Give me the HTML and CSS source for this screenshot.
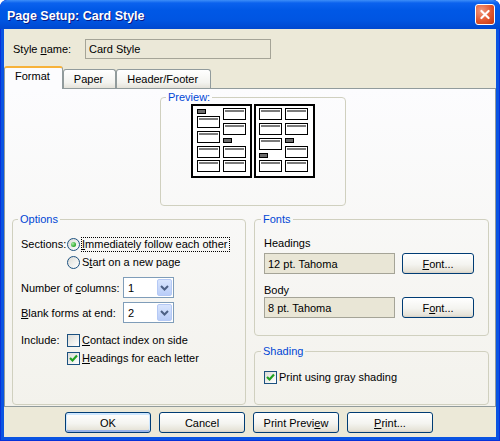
FILE: index.html
```html
<!DOCTYPE html>
<html lang="en">
<head>
    <meta charset="UTF-8">
    <title>Page Setup: Card Style</title>
    <link rel="stylesheet" href="styles.css">
</head>
<body>
    <div class="window">
        <div class="titlebar">
            <span class="title">Page Setup: Card Style</span>
            <div class="close-btn">
                <svg width="20" height="21" viewBox="0 0 20 21">
                    <path d="M6 6.5 L14 14.5 M14 6.5 L6 14.5" stroke="#fff" stroke-width="2.4" stroke-linecap="round"/>
                </svg>
            </div>
        </div>

        <div class="client">
            <div class="style-row">
                <span class="style-label">Style <u>n</u>ame:</span>
                <div class="textbox style-name">Card Style</div>
            </div>

            <div class="tabs">
                <div class="tab active">Format</div>
                <div class="tab">Paper</div>
                <div class="tab">Header/Footer</div>
            </div>

            <div class="tab-panel">
                <fieldset class="group preview-group">
                    <legend>Preview:</legend>
                    <svg class="preview-pages" width="125" height="74" viewBox="0 0 125 74">
                        <defs>
                            <g id="card">
                                <rect x="0.5" y="0.5" width="22" height="11" fill="#fff" stroke="#000"/>
                                <rect x="2" y="2" width="19" height="2" fill="#7b7b7b"/>
                            </g>
                            <rect id="tag" x="0.5" y="0.5" width="8" height="4" fill="#6a6a6a" stroke="#000"/>
                        </defs>
                        <!-- left page -->
                        <rect x="1" y="1" width="59" height="72" fill="#fff" stroke="#000" stroke-width="2"/>
                        <use href="#tag" x="6" y="5"/>
                        <use href="#card" x="6" y="12"/>
                        <use href="#card" x="6" y="27"/>
                        <use href="#card" x="6" y="42"/>
                        <use href="#card" x="6" y="56"/>
                        <use href="#card" x="32" y="4"/>
                        <use href="#card" x="32" y="19"/>
                        <use href="#tag" x="32" y="34"/>
                        <use href="#card" x="32" y="42"/>
                        <use href="#card" x="32" y="56"/>
                        <!-- right page -->
                        <rect x="64" y="1" width="59" height="72" fill="#fff" stroke="#000" stroke-width="2"/>
                        <use href="#card" x="68" y="4"/>
                        <use href="#card" x="68" y="19"/>
                        <use href="#card" x="68" y="34"/>
                        <use href="#tag" x="68" y="49"/>
                        <use href="#card" x="68" y="56"/>
                        <use href="#card" x="94" y="4"/>
                        <use href="#card" x="94" y="19"/>
                        <use href="#tag" x="94" y="34"/>
                        <use href="#card" x="94" y="42"/>
                        <use href="#card" x="94" y="56"/>
                    </svg>
                </fieldset>

                <div class="columns">
                    <fieldset class="group options-group">
                        <legend>Options</legend>
                        <div class="opt-row">
                            <span class="opt-label">Sections:</span>
                            <span class="radio checked"></span>
                            <span class="choice focused"><u>I</u>mmediately follow each other</span>
                        </div>
                        <div class="opt-row">
                            <span class="opt-label"></span>
                            <span class="radio"></span>
                            <span class="choice">S<u>t</u>art on a new page</span>
                        </div>
                        <div class="opt-row select-row">
                            <span class="opt-label wide">Number of <u>c</u>olumns:</span>
                            <div class="select">
                                <span class="select-value">1</span>
                                <span class="select-arrow">
                                    <svg width="9" height="6" viewBox="0 0 9 6"><path d="M1 1 L4.5 4.5 L8 1" fill="none" stroke="#4d6185" stroke-width="2"/></svg>
                                </span>
                            </div>
                        </div>
                        <div class="opt-row select-row">
                            <span class="opt-label wide"><u>B</u>lank forms at end:</span>
                            <div class="select">
                                <span class="select-value">2</span>
                                <span class="select-arrow">
                                    <svg width="9" height="6" viewBox="0 0 9 6"><path d="M1 1 L4.5 4.5 L8 1" fill="none" stroke="#4d6185" stroke-width="2"/></svg>
                                </span>
                            </div>
                        </div>
                        <div class="opt-row include-row">
                            <span class="opt-label">Include:</span>
                            <span class="checkbox"></span>
                            <span><u>C</u>ontact index on side</span>
                        </div>
                        <div class="opt-row">
                            <span class="opt-label"></span>
                            <span class="checkbox checked">
                                <svg width="11" height="11" viewBox="0 0 11 11"><path d="M2 5 L4.5 7.5 L9 2.5" fill="none" stroke="#21a121" stroke-width="2.2"/></svg>
                            </span>
                            <span><u>H</u>eadings for each letter</span>
                        </div>
                    </fieldset>

                    <div class="right-col">
                        <fieldset class="group fonts-group">
                            <legend>Fonts</legend>
                            <div class="fonts-label">Headings</div>
                            <div class="font-row">
                                <div class="textbox font-field">12 pt. Tahoma</div>
                                <div class="btn font-btn"><span><u>F</u>ont...</span></div>
                            </div>
                            <div class="fonts-label body-label">Body</div>
                            <div class="font-row">
                                <div class="textbox font-field">8 pt. Tahoma</div>
                                <div class="btn font-btn"><span>F<u>o</u>nt...</span></div>
                            </div>
                        </fieldset>

                        <fieldset class="group shading-group">
                            <legend>Shading</legend>
                            <div class="opt-row shading-row">
                                <span class="checkbox checked">
                                    <svg width="11" height="11" viewBox="0 0 11 11"><path d="M2 5 L4.5 7.5 L9 2.5" fill="none" stroke="#21a121" stroke-width="2.2"/></svg>
                                </span>
                                <span>Print using <u>g</u>ray shading</span>
                            </div>
                        </fieldset>
                    </div>
                </div>
            </div>

            <div class="buttons">
                <div class="btn default">OK</div>
                <div class="btn">Cancel</div>
                <div class="btn">Print Previ<u>e</u>w</div>
                <div class="btn"><u>P</u>rint...</div>
            </div>
        </div>
    </div>
</body>
</html>
```

FILE: styles.css
```css
* {
    box-sizing: border-box;
}

body {
    margin: 0;
    font-family: "Liberation Sans", Arial, sans-serif;
    font-size: 11px;
    color: #000;
}

/* window frame */
.window {
    width: 500px;
    height: 441px;
    display: flex;
    flex-direction: column;
    background: #0a54e2;
    border-radius: 7px 7px 0 0;
    box-shadow: inset 0 0 0 1px #0831d9;
    overflow: hidden;
}

.titlebar {
    height: 29px;
    display: flex;
    align-items: center;
    justify-content: space-between;
    padding: 0 5px 0 7px;
    background: linear-gradient(#3d8ef8 0, #0b62ee 3px, #0058e6 10px, #0055e2 20px, #0048cf 29px);
    border-radius: 7px 7px 0 0;
}

.title {
    margin-top: 3px;
    color: #fff;
    font-weight: bold;
    font-size: 12.5px;
    text-shadow: 1px 1px #0a1883;
}

.close-btn {
    width: 20px;
    height: 21px;
    border: 1px solid #fff;
    border-radius: 3px;
    background: radial-gradient(circle at 30% 30%, #f09a80, #e2572f 55%, #c3360f);
    display: flex;
    align-items: center;
    justify-content: center;
}

.client {
    flex: 1;
    margin: 0 4px 4px;
    background: #ece9d8;
    display: flex;
    flex-direction: column;
}

/* push buttons */
.btn {
    width: 86px;
    height: 21px;
    border: 1px solid #003c74;
    border-radius: 3px;
    background: linear-gradient(#fff, #f4f4f0 55%, #e6e3d8 90%, #d6d0c5);
    display: flex;
    align-items: center;
    justify-content: center;
    white-space: nowrap;
}

.btn.default {
    box-shadow: inset 0 1px 0 1px #cee7ff, inset 0 -1px 0 1px #98b4e8;
}

/* style name */
.style-row {
    display: flex;
    align-items: center;
    padding: 10px 0 0 9px;
}

.style-label {
    width: 72px;
}

.textbox {
    height: 20px;
    border: 1px solid #a5a497;
    background: #ebe8d8;
    padding-left: 3px;
    display: flex;
    align-items: center;
    white-space: nowrap;
}

.style-name {
    width: 186px;
}

/* tabs */
.tabs {
    display: flex;
    align-items: flex-end;
    margin-top: 7px;
}

.tab {
    height: 19px;
    padding: 0 12px 0 10px;
    border: 1px solid #919b9c;
    border-bottom: none;
    border-radius: 3px 3px 0 0;
    background: linear-gradient(#fff, #f3f3ef 70%, #e4e2d9);
    display: flex;
    align-items: center;
}

.tab.active {
    height: 23px;
    margin-bottom: -1px;
    padding-bottom: 6px;
    border-top: 2px solid #f7b23a;
    background: #fcfcfe;
    position: relative;
    z-index: 1;
}

.tab-panel {
    flex: 1;
    border: 1px solid #919b9c;
    background: linear-gradient(#fcfcfe, #f3f2ec);
    display: flex;
    flex-direction: column;
    padding: 2px 6px 1px 7px;
}

/* group boxes */
.group {
    margin: 0;
    padding: 0;
    min-width: 0;
    border: 1px solid #d0d0bf;
    border-radius: 4px;
}

.group legend {
    color: #0046d5;
    padding: 0 2px;
    line-height: 13px;
    margin-left: -3px;
}

.preview-group {
    width: 186px;
    height: 115px;
    margin-left: 148px;
    display: flex;
    align-items: center;
    justify-content: center;
}

.preview-group legend {
    margin-left: 5px;
}

.columns {
    flex: 1;
    display: flex;
    gap: 8px;
    margin-top: 7px;
}

.options-group {
    width: 234px;
    flex-shrink: 0;
    padding: 9px 8px 0;
}

.opt-row {
    display: flex;
    align-items: center;
    height: 18px;
    white-space: nowrap;
}

.opt-label {
    width: 46px;
    flex-shrink: 0;
}

.opt-label.wide {
    width: 102px;
}

.radio {
    width: 13px;
    height: 13px;
    flex-shrink: 0;
    margin-right: 1px;
    border: 1px solid #1c5180;
    border-radius: 50%;
    background: linear-gradient(135deg, #dcdcd7, #fff);
    display: flex;
    align-items: center;
    justify-content: center;
}

.radio.checked::after {
    content: "";
    width: 5px;
    height: 5px;
    border-radius: 50%;
    background: radial-gradient(circle at 35% 35%, #a6eca3, #21a121 75%);
}

.choice {
    border: 1px dotted transparent;
    padding: 0 1px 1px 0;
}

.choice.focused {
    border-color: #000;
}

.checkbox {
    width: 13px;
    height: 13px;
    flex-shrink: 0;
    margin-right: 2px;
    border: 1px solid #1c5180;
    background: linear-gradient(135deg, #dcdcd7, #fff);
    display: flex;
    align-items: center;
    justify-content: center;
}

.select-row {
    height: 21px;
    margin-top: 6px;
}

.select-row + .select-row {
    margin-top: 4px;
}

.include-row {
    margin-top: 8px;
}

.select {
    width: 51px;
    height: 21px;
    border: 1px solid #7f9db9;
    background: #fff;
    padding: 1px;
    display: flex;
    align-items: center;
    justify-content: space-between;
}

.select-value {
    padding-left: 3px;
}

.select-arrow {
    width: 15px;
    height: 17px;
    border: 1px solid #b5c9f5;
    border-radius: 2px;
    background: linear-gradient(#d9e5fd, #b9cdf8);
    display: flex;
    align-items: center;
    justify-content: center;
}

/* right column */
.right-col {
    flex: 1;
    min-width: 0;
    display: flex;
    flex-direction: column;
}

.fonts-group {
    height: 123px;
    padding: 10px 9px 0;
}

.fonts-label {
    height: 14px;
    line-height: 14px;
}

.body-label {
    margin-top: 9px;
}

.font-row {
    display: flex;
    align-items: center;
    gap: 7px;
    margin-top: 3px;
}

.body-label + .font-row {
    margin-top: 0;
}

.font-field {
    width: 131px;
    height: 21px;
    background: #e9e6d6;
}

.btn.font-btn {
    width: 72px;
}

.shading-group {
    flex: 1;
    margin-top: 9px;
    padding: 12px 9px 0;
}

.shading-row {
    height: 14px;
}

.buttons {
    display: flex;
    gap: 8px;
    height: 30px;
    padding: 5px 0 0 61px;
}
```
